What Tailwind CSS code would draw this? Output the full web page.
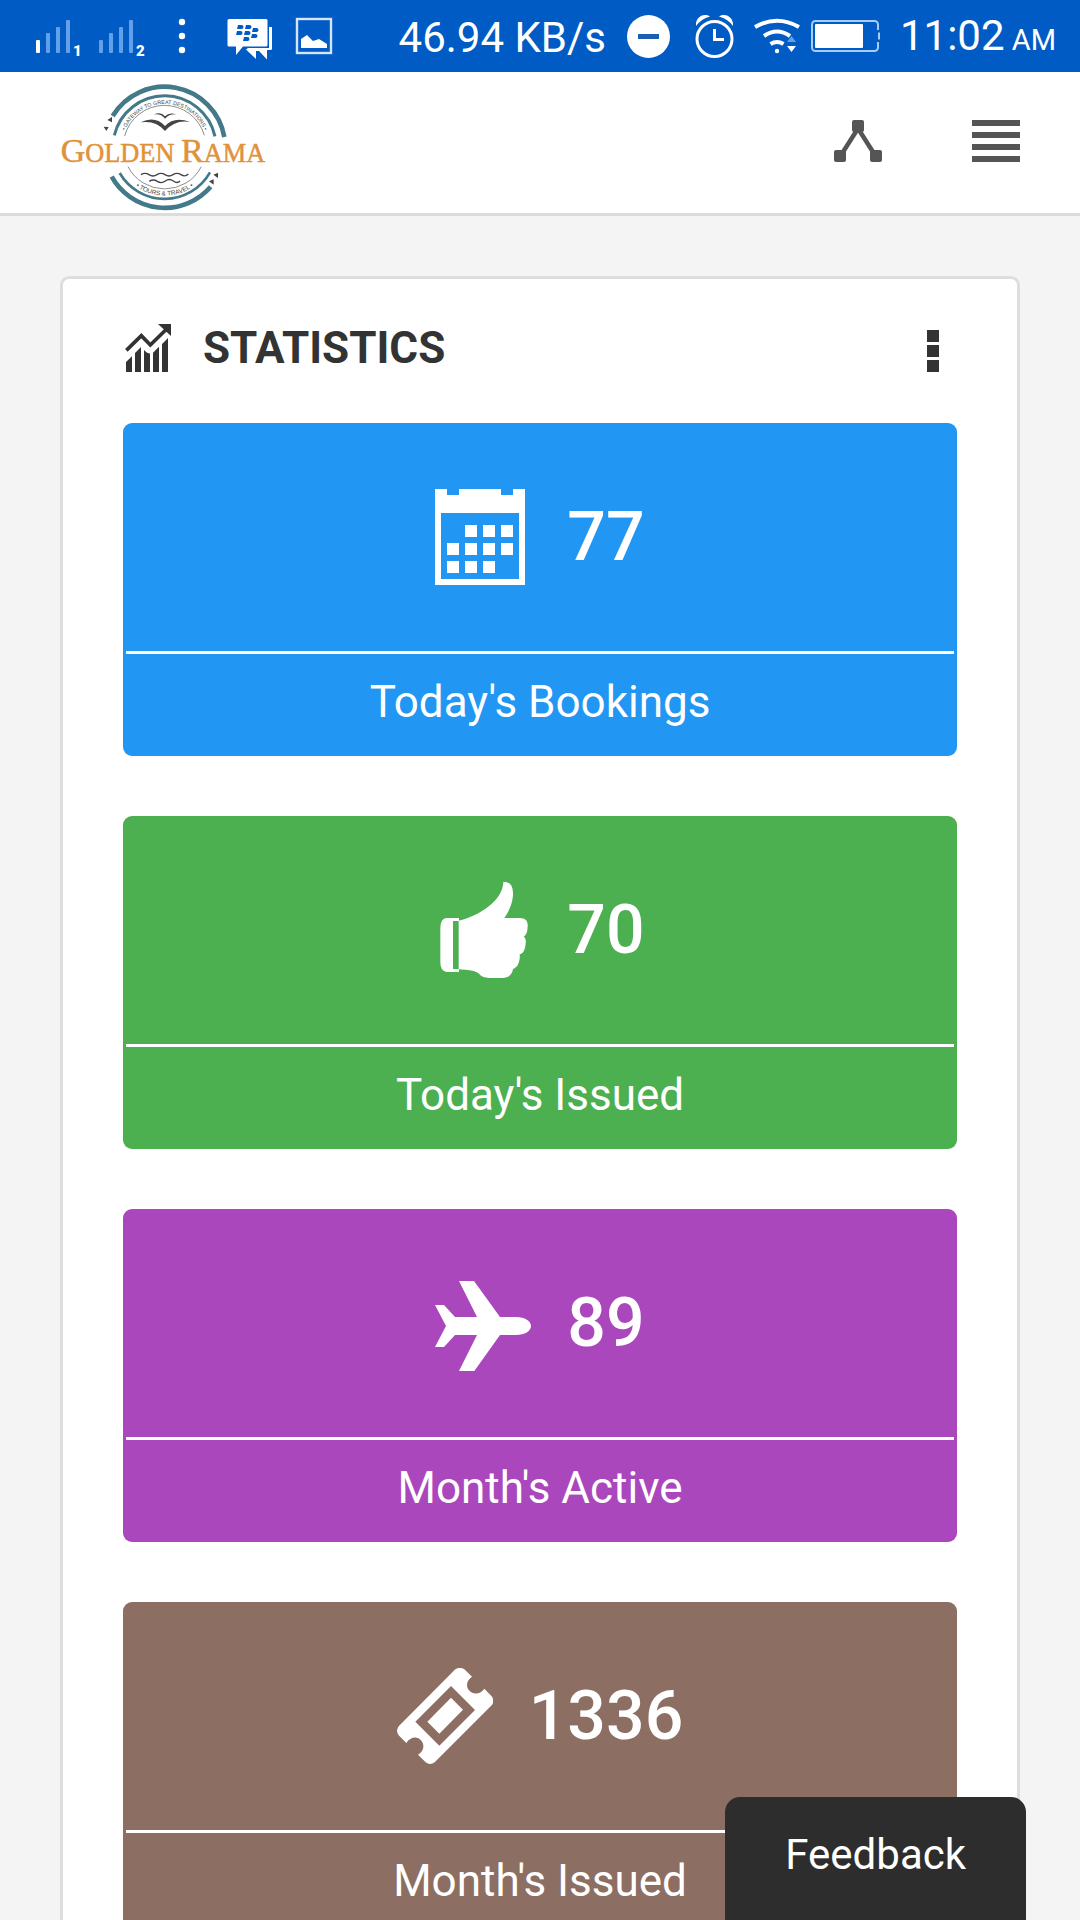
<!DOCTYPE html>
<html lang="en">
<head>
<meta charset="utf-8">
<meta name="viewport" content="width=device-width, initial-scale=1">
<title>Golden Rama – Statistics</title>
<script src="https://cdn.jsdelivr.net/npm/@tailwindcss/browser@4"></script>
</head>
<body class="flex h-screen flex-col overflow-hidden bg-[#f4f4f4] font-['Roboto',sans-serif] text-[#333]">

<!-- Device status bar -->
<div class="flex h-[72px] shrink-0 items-center justify-between bg-[#005bc4] pr-6 pl-9 text-[42px] leading-[60px] text-white">
  <div class="flex items-center">
    <svg class="h-[72px] w-[300px]" viewBox="36 0 300 72" fill="#fff" aria-hidden="true">
      <rect x="36" y="40" width="4" height="13" rx="1"/>
      <g fill="#62a0ea">
        <rect x="46" y="33" width="4" height="20" rx="1"/><rect x="56" y="27" width="4" height="26" rx="1"/><rect x="66" y="20" width="4" height="33" rx="1"/>
        <rect x="99" y="40" width="4" height="13" rx="1"/><rect x="109" y="33" width="4" height="20" rx="1"/><rect x="119" y="27" width="4" height="26" rx="1"/><rect x="129" y="20" width="4" height="33" rx="1"/>
      </g>
      <text x="73" y="56" font-size="15" font-weight="900">1</text>
      <text x="136" y="56" font-size="15" font-weight="900">2</text>
      <circle cx="182" cy="22" r="3.2"/><circle cx="182" cy="36" r="3.2"/><circle cx="182" cy="50" r="3.2"/>
      <path d="M229 19H266a1.500 1.500 0 0 1 1.500 1.500V45a1.500 1.500 0 0 1-1.500 1.500H243L236 55V46.500H229a1.500 1.500 0 0 1-1.500-1.500V20.500A1.500 1.500 0 0 1 229 19Z"/>
      <path d="M269 27h3V48.500a1.500 1.500 0 0 1-1.500 1.500H267v9.500L259 51l-3 0V59L246 49.500l2-1.500H269Z"/>
      <g fill="#005bc4">
        <path id="bb" d="M238 25h3.500a2 2 0 0 1 0 4H237Z"/><use href="#bb" x="8"/>
        <use href="#bb" x="-1" y="6"/><use href="#bb" x="7" y="6"/><use href="#bb" x="15" y="3"/><use href="#bb" x="14" y="9"/><use href="#bb" x="6" y="12"/>
      </g>
      <rect x="297" y="19" width="34" height="34" fill="none" stroke="#d5e6fb" stroke-width="2.400"/>
      <path d="M301 48V39l6-4 6 6 6-2 8 5v4Z"/>
    </svg>
  </div>
  <div class="flex items-center">
    <span class="pt-1">46.94 KB/s</span>
    <svg class="ml-5 h-[72px] w-[254px]" viewBox="624 0 254 72" fill="none" stroke="#fff" aria-hidden="true">
      <circle cx="646.500" cy="36.500" r="21.500" fill="#fff" stroke="none"/>
      <path d="M636 36.500h21" stroke="#1b5fb4" stroke-width="5"/>
      <circle cx="712.500" cy="39" r="17.500" stroke-width="3"/>
      <path d="M712.500 29V39.500H722" stroke-width="3"/>
      <path d="M694 26C693 18 701 12 708 16.500Q699 19 694 26ZM731 26C732 18 724 12 717 16.500Q726 19 731 26Z" fill="#fff" stroke="none"/>
      <path d="M753 27Q775 14.500 797 27M762 36Q775 27 788 36M768.500 44Q775 40 781.500 44" stroke-width="4"/>
      <circle cx="775" cy="51" r="2.200" fill="#fff" stroke="none"/>
      <path d="M785 42l4.500-6 4.500 6Z" fill="#62a0ea" stroke="none"/>
      <path d="M785 46h9l-4.500 6Z" fill="#fff" stroke="none"/>
      <path d="M876 30V24.500a3.500 3.500 0 0 0-3.500-3.500H813.500a3.500 3.500 0 0 0-3.500 3.500V47.500a3.500 3.500 0 0 0 3.500 3.500H872.500a3.500 3.500 0 0 0 3.500-3.500V42M877 32.500v7" stroke="#a9ccf5" stroke-width="2"/>
      <rect x="813" y="24" width="48" height="24" rx="1" fill="#fff" stroke="none"/>
    </svg>
    <span class="ml-5 pt-1">11:02<span class="text-[29px]"> AM</span></span>
  </div>
</div>

<!-- App header -->
<header class="flex h-36 shrink-0 items-center justify-between border-b-3 border-[#dcdcdc] bg-white px-15">
  <a href="#" aria-label="Golden Rama Tours &amp; Travel">
    <svg class="h-[141px] w-[206px]" viewBox="30 6 618 423" fill="none">
      <g stroke="#437a89">
        <path d="M188 138A182 182 0 0 1 523 201" stroke-width="14"/>
        <path d="M193 196A155 155 0 0 1 495 199" stroke-width="9"/>
        <path d="M185 320A182 182 0 0 0 482 350" stroke-width="14"/>
        <path d="M209 309A156 156 0 0 0 480 307" stroke-width="8"/>
      </g>
      <path d="M224 198A124 124 0 0 1 463 196M234 290A124 124 0 0 0 454 290" stroke="#555" stroke-width="2"/>
      <path id="arcTop" d="M215 231A129 129 0 0 1 473 231"/>
      <path id="arcBottom" d="M198 231A146 146 0 0 0 490 231"/>
      <text fill="#444" font-family="Liberation Sans, sans-serif" font-size="16" text-anchor="middle"><textPath href="#arcTop" startOffset="50%">• GATEWAY TO GREAT DESTINATIONS •</textPath></text>
      <text fill="#444" font-family="Liberation Sans, sans-serif" font-size="19" text-anchor="middle"><textPath href="#arcBottom" startOffset="50%">•  TOURS &amp; TRAVEL  •</textPath></text>
      <g fill="#444">
        <path d="M272 157Q315 136 345 168Q373 138 420 156Q375 148 345 183Q318 150 272 157Z"/>
        <path d="M312 133Q333 124 345 139Q357 126 379 133Q358 131 345 146Q333 130 312 133Z"/>
        <path d="M172 150l14-9v16ZM161 170l15 1-7 12ZM490 314l14-6v16ZM477 334l14-6v16Z"/>
      </g>
      <path d="M273 314q12-8 24 0t24 0 24 0 24 0 24 0 22-2M298 334q12-8 24 0t24-1 24 0 20 0" stroke="#444" stroke-width="4"/>
      <text x="32" y="276" fill="#e0923a" stroke="#e0923a" stroke-width="1.500" font-family="Liberation Serif, serif" font-size="102">G<tspan font-size="79">OLDEN </tspan>R<tspan font-size="79">AMA</tspan></text>
    </svg>
  </a>
  <nav class="flex gap-[90px] pb-1">
    <button type="button" aria-label="Share">
      <svg class="size-12" viewBox="0 0 48 48" fill="#555"><rect x="18" y="3" width="12" height="12" rx="2"/><rect y="33" width="12" height="12" rx="2"/><rect x="36" y="33" width="12" height="12" rx="2"/><path d="M23 13L9 35M25 13L39 35" stroke="#555" stroke-width="4.500"/></svg>
    </button>
    <button type="button" aria-label="Menu">
      <svg class="size-12" viewBox="0 0 48 48" fill="#555"><path d="M0 3h48v6H0zM0 15h48v6H0zM0 27h48v6H0zM0 39h48v6H0z"/></svg>
    </button>
  </nav>
</header>

<main class="min-h-0 flex-1 overflow-y-auto px-15 py-15 [scrollbar-width:none]">
  <section class="rounded-[9px] border-3 border-[#dedede] bg-white px-15 pt-9 pb-15">
    <div class="mb-[42px] flex h-[66px] items-center">
      <svg class="size-12" viewBox="219 192 144 144" fill="#333" aria-hidden="true">
        <path d="M228 306l18-17v47h-18zM255 279l18-18v75h-18zM282 270l7 7q5 4 11 3v56h-18zM309 278l18-18v76h-18zM336 252l18-18v102h-18z"/>
        <path d="M229 271L274 227L301 255L350 207" fill="none" stroke="#333" stroke-width="11"/>
        <path d="M324 192h40v37Z"/>
      </svg>
      <h1 class="ml-8 flex-1 text-[44px] leading-[66px] font-bold">STATISTICS</h1>
      <button type="button" aria-label="More options">
        <svg class="size-12" viewBox="0 0 48 48" fill="#333"><path d="M18 6h12v12H18zM18 21h12v12H18zM18 36h12v12H18z"/></svg>
      </button>
    </div>

    <div class="flex flex-col gap-15 text-white">
      <article class="rounded-[9px] bg-[#2196f3] p-[3px]">
        <div class="flex h-[225px] items-center justify-center gap-9 pb-1 text-[68px] leading-none font-medium">
          <svg class="size-24" viewBox="108 87 288 288" fill="#fff" aria-hidden="true">
            <path fill-rule="evenodd" d="M108 87h36v18h36V87h126v18h36V87h36v288H108ZM126 159v198h234V159Z"/>
            <path d="M198 195h36v36h-36zM252 195h36v36h-36zM306 195h36v36h-36zM144 249h36v36h-36zM198 249h36v36h-36zM252 249h36v36h-36zM306 249h36v36h-36zM144 303h36v36h-36zM198 303h36v36h-36zM252 303h36v36h-36z"/>
          </svg>
          <span>77</span>
        </div>
        <h2 class="h-[102px] border-t-3 border-white text-center text-[44px] leading-[96px]">Today's Bookings</h2>
      </article>

      <article class="rounded-[9px] bg-[#4caf50] p-[3px]">
        <div class="flex h-[225px] items-center justify-center gap-9 pb-1 text-[68px] leading-none font-medium">
          <svg class="size-24" viewBox="108 66 288 288" fill="#fff" aria-hidden="true">
            <path fill-rule="evenodd" d="M143 174H180V183H162V327H180V336H143Q124 334 124 306V204Q124 176 143 174Z"/>
            <path d="M179 182C240 168 312 122 313 66C336 64 343 82 342 106C340 132 330 154 316 174H362C381 174 387 184 386 199C385 214 384 224 374 230C382 234 381 246 379 258C377 272 371 281 362 283C364 296 359 323 342 327C340 342 330 354 310 354H277C262 354 249 352 241 342C230 332 205 329 179 328Z"/>
          </svg>
          <span>70</span>
        </div>
        <h2 class="h-[102px] border-t-3 border-white text-center text-[44px] leading-[96px]">Today's Issued</h2>
      </article>

      <article class="rounded-[9px] bg-[#ab47bc] p-[3px]">
        <div class="flex h-[225px] items-center justify-center gap-9 pb-1 text-[68px] leading-none font-medium">
          <svg class="size-24" viewBox="108 75 288 288" fill="#fff" aria-hidden="true">
            <path d="M180 93H225L303 201H351C378 201 396 214 396 228C396 243 378 255 351 255H303L226 363H180L234 255H168L135 291H108L141 228L108 165H135L168 201H234Z"/>
          </svg>
          <span>89</span>
        </div>
        <h2 class="h-[102px] border-t-3 border-white text-center text-[44px] leading-[96px]">Month's Active</h2>
      </article>

      <article class="rounded-[9px] bg-[#8d6e63] p-[3px]">
        <div class="flex h-[225px] items-center justify-center gap-9 pb-1 text-[68px] leading-none font-medium">
          <svg class="size-24" viewBox="52 84 288 288" fill="#fff" aria-hidden="true">
            <path fill-rule="evenodd" d="M227 88Q241 79 254 88L277 110C262 120 257 138 268 151C281 166 302 163 314 146L336 169Q346 183 336 196L165 367Q151 377 138 367L115 344C132 334 136 315 125 302C112 287 92 291 80 309L57 286Q47 272 57 259ZM214 138L107 245L179 317L286 210ZM214 173L250 209L179 281L143 245Z"/>
          </svg>
          <span>1336</span>
        </div>
        <h2 class="h-[102px] border-t-3 border-white text-center text-[44px] leading-[96px]">Month's Issued</h2>
      </article>
    </div>
  </section>
</main>

<button type="button" class="fixed right-[54px] bottom-0 rounded-t-[15px] bg-[#2d2d2d] px-15 pt-7 pb-[35px] text-[42px] leading-[60px] text-white">Feedback</button>
</body>
</html>
